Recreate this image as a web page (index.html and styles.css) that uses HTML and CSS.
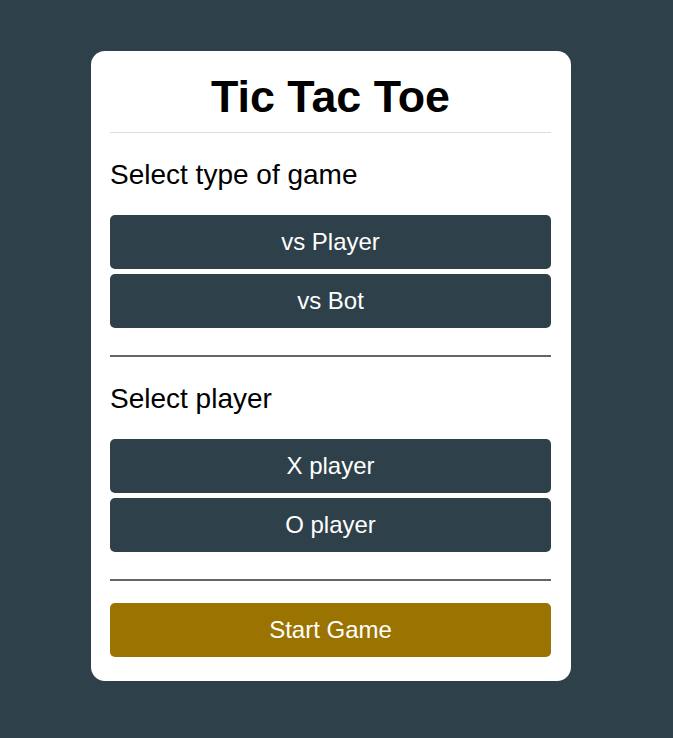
FILE: index.html
```html
<!DOCTYPE html>
<html lang="en">
<head>
<meta charset="utf-8">
<title>Tic Tac Toe</title>
<link rel="stylesheet" href="styles.css">
</head>
<body>
<main class="card">
  <h1 class="title">Tic Tac Toe</h1>
  <section class="group">
    <p class="label">Select type of game</p>
    <button class="btn">vs Player</button>
    <button class="btn">vs Bot</button>
  </section>
  <hr class="divider">
  <section class="group">
    <p class="label">Select player</p>
    <button class="btn">X player</button>
    <button class="btn">O player</button>
  </section>
  <hr class="divider">
  <button class="btn btn-start">Start Game</button>
</main>
</body>
</html>
```

FILE: styles.css
```css
html, body {
  margin: 0;
  padding: 0;
}

body {
  background: #2e404a;
  font-family: "Liberation Sans", Arial, sans-serif;
  min-height: 738px;
  box-sizing: border-box;
  padding: 51px 0 0 91px;
}

.card {
  width: 480px;
  box-sizing: border-box;
  background: #ffffff;
  border-radius: 14px;
  padding: 20px 20px 19px 19px;
  display: flex;
  flex-direction: column;
}

.title {
  margin: 0;
  font-size: 44.8px;
  font-weight: bold;
  line-height: normal;
  text-align: center;
  color: #000;
  padding-bottom: 10px;
  border-bottom: 1px solid #dddddd;
}

.group {
  display: flex;
  flex-direction: column;
}

.label {
  margin: 26px 0 24px;
  font-size: 28px;
  line-height: normal;
  color: #000;
}

.btn {
  display: flex;
  align-items: center;
  justify-content: center;
  height: 54px;
  margin: 0 0 5px;
  padding: 0;
  border: none;
  border-radius: 5px;
  background: #2e404a;
  color: #ffffff;
  font-family: "Liberation Sans", Arial, sans-serif;
  font-size: 24px;
  line-height: normal;
  cursor: pointer;
}

.btn-start {
  background: #9a7300;
}

.divider {
  margin: 22px 0 0;
  border: none;
  height: 2px;
  background: #666666;
}

.divider + .btn-start {
  margin-top: 22px;
}
```
